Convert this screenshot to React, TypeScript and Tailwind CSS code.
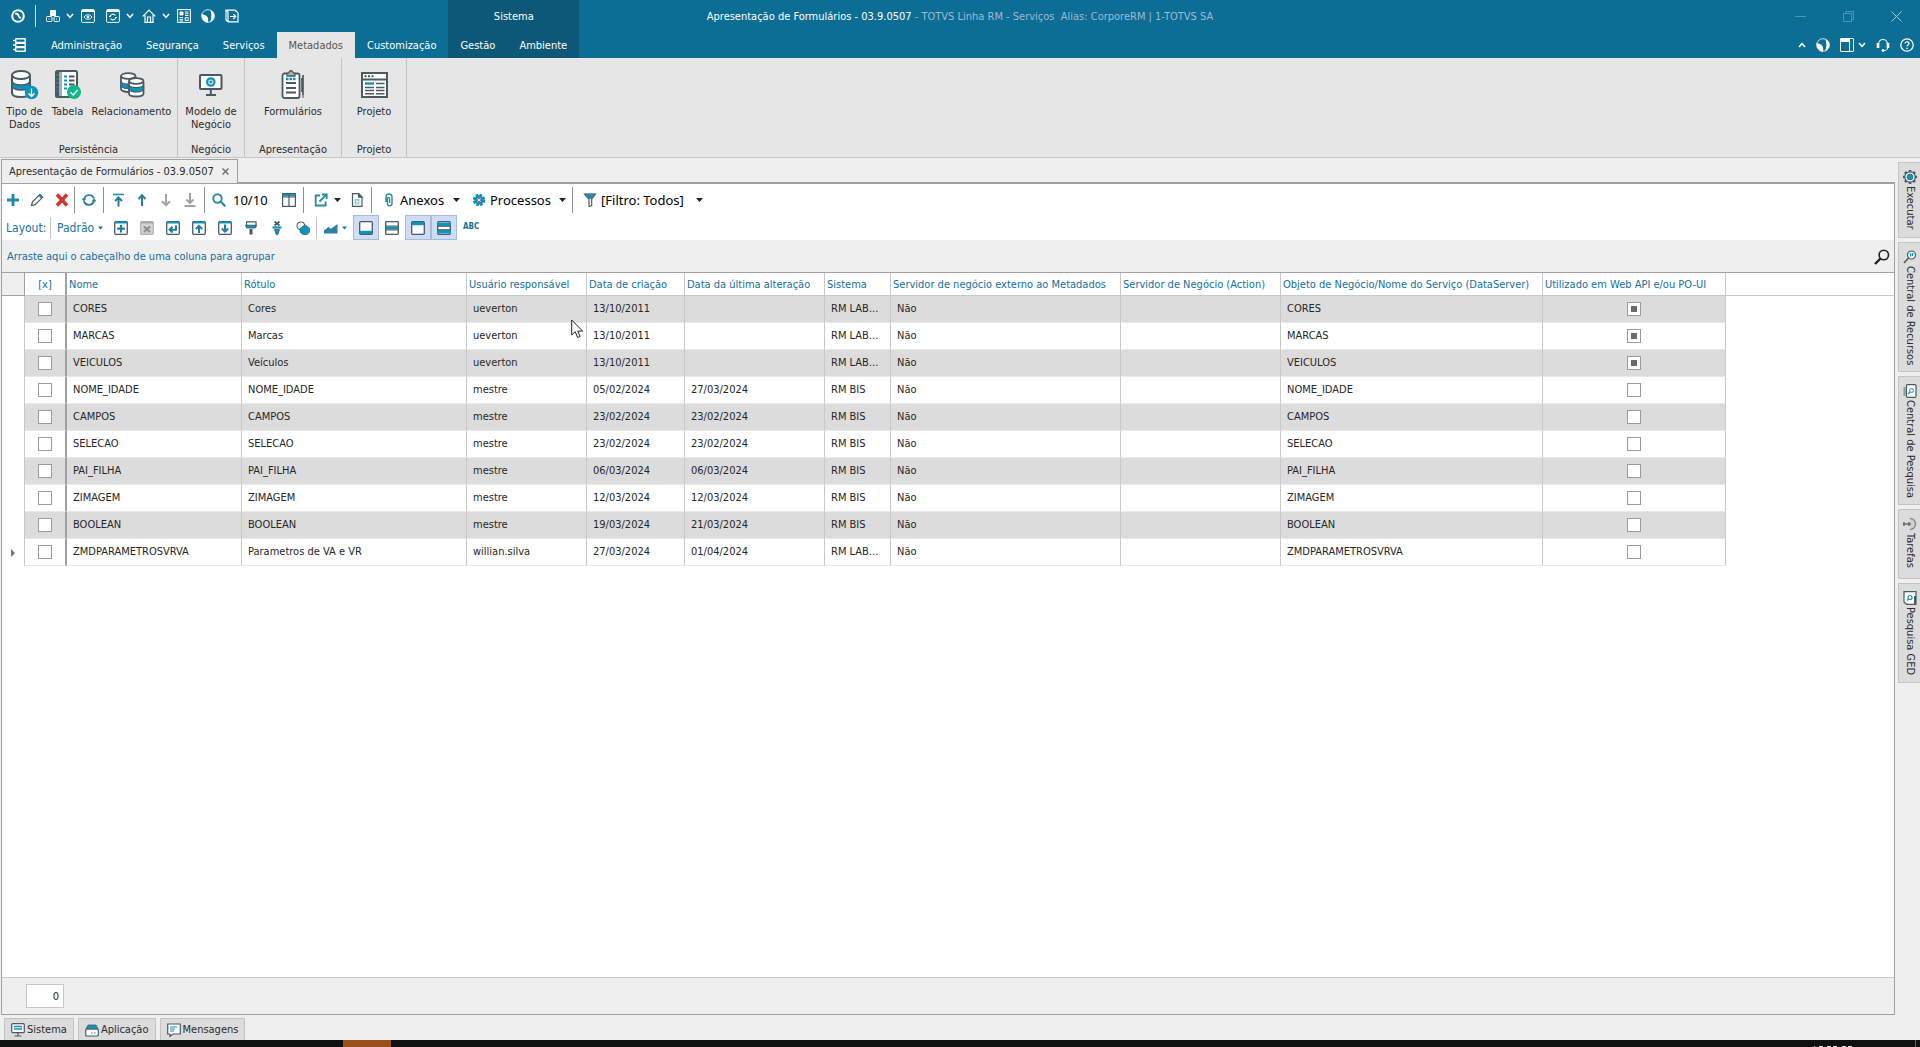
import type { ReactNode } from "react";

type IconProps = { className?: string };

const BLUE = "#0e93bd";
const SLATE = "#4a5a60";
const TEAL = "#2a8ba0";

/* ---------- title bar icons ---------- */

function Chevron({ up = false }: { up?: boolean }) {
  return (
    <svg width="8" height="6" viewBox="0 0 8 6" fill="none" stroke="#fff" strokeWidth="1.5">
      <path d={up ? "M1 5l3-3.3L7 5" : "M1 1l3 3.3L7 1"} />
    </svg>
  );
}

function Caret({ className = "text-[#222]" }: IconProps) {
  return (
    <svg className={className} width="7" height="4" viewBox="0 0 7 4" fill="currentColor">
      <path d="M0 0h7L3.5 4z" />
    </svg>
  );
}

function LogoIcon() {
  return (
    <svg width="14" height="14" viewBox="0 0 14 14" fill="none" stroke="#fff">
      <circle cx="7" cy="7" r="5.8" strokeWidth="2" />
      <path d="M4.200 5c1.600-.8 2.800.1 3.200 1.500.4 1.400 1.200 2.300 2.500 2.300" strokeWidth="1.900" />
    </svg>
  );
}

function CubesIcon() {
  return (
    <svg width="14" height="14" viewBox="0 0 14 14" fill="none" stroke="#fff">
      <path d="M4.500 1.500h5v5h-5z" fill="#fff" />
      <rect x=".5" y="7.500" width="5.500" height="5" rx="1" />
      <rect x="8" y="7.500" width="5.500" height="5" rx="1" />
      <path d="M3 9.500v1M10.500 9.500v1" />
    </svg>
  );
}

function PageFrame({ children }: { children: ReactNode }) {
  return (
    <svg width="14" height="14" viewBox="0 0 14 14" fill="none" stroke="#fff">
      <rect x=".6" y=".6" width="12.800" height="12.800" rx="1" />
      <path d="M1 2h12" strokeWidth="2" />
      {children}
    </svg>
  );
}

function HomeIcon() {
  return (
    <svg width="14" height="14" viewBox="0 0 14 14" fill="none" stroke="#fff" strokeWidth="1.200">
      <path d="M.8 7.300L7 1l6.200 6.300" />
      <path d="M3 6v7.300h8V6M5.500 13V8h3v5" />
    </svg>
  );
}

function BoardIcon() {
  return (
    <svg width="14" height="14" viewBox="0 0 14 14" fill="none" stroke="#fff">
      <rect x=".6" y=".6" width="12.800" height="12.800" />
      <path d="M3 3h3v3H3z" fill="#fff" />
      <path d="M8 3h3.500M8 4.800h3.500M8 6.500h3.500M2.500 8.500h3.500M2.500 10.300h3.500M2.500 12h3.500M8.200 8.700h3v2.800h-3z" />
    </svg>
  );
}

function TotvsIcon() {
  return (
    <svg width="14" height="14" viewBox="0 0 14 14">
      <circle cx="7" cy="7" r="6.300" fill="none" stroke="#fff" strokeWidth=".8" />
      <path d="M.7 5.200C2.500 5 5 6 6.300 7.800c.9 1.500 1 3.700.7 5.600C3.500 13.500.3 10.400.7 5.200z" fill="#fff" />
      <path d="M9.500 1.200c3 1 4.300 3.600 3.900 6.600-.4 2.700-2 4.700-4.400 5.300 1.300-2.600 2-6.300.5-11.900z" fill="#fff" />
    </svg>
  );
}

function ExitIcon() {
  return (
    <svg width="14" height="14" viewBox="0 0 14 14" fill="none" stroke="#fff" strokeWidth="1.200">
      <path d="M1 1.200h9l3 2.500v9.100H3L1 11z" />
      <path d="M1.500 1.500L3 3v10" />
      <path d="M5 7.500h5.500M8.200 5l2.500 2.500L8.200 10" />
    </svg>
  );
}

function MenuIcon() {
  return (
    <svg width="13" height="14" viewBox="0 0 13 14" fill="none" stroke="#fff" strokeWidth="1.400">
      <rect x="2.700" y=".8" width="9.500" height="3.600" rx=".5" />
      <rect x="2.700" y="5.200" width="9.500" height="3.600" rx=".5" />
      <rect x="2.700" y="9.600" width="9.500" height="3.600" rx=".5" />
      <path d="M0 2.500h3M0 7h3M0 11.500h3" />
    </svg>
  );
}

function PanelIcon() {
  return (
    <svg width="14" height="14" viewBox="0 0 14 14" fill="none" stroke="#fff">
      <rect x=".5" y=".5" width="13" height="13" rx=".5" />
      <path d="M9.500 1v12" />
      <path d="M1 2.500h8" strokeWidth="3" />
    </svg>
  );
}

function HeadsetIcon() {
  return (
    <svg width="14" height="14" viewBox="0 0 14 14" fill="none" stroke="#fff">
      <path d="M2.500 9V6a4.500 4.500 0 019 0v3" strokeWidth="1.200" />
      <path d="M2 5v5M12 5v5" strokeWidth="2.600" />
      <path d="M11.500 10c0 1.800-1.500 2.600-4 2.600" />
      <circle cx="7" cy="12.500" r="1" fill="#fff" />
    </svg>
  );
}

function HelpIcon() {
  return (
    <svg width="14" height="14" viewBox="0 0 14 14" fill="none" stroke="#fff">
      <circle cx="7" cy="7" r="6.200" strokeWidth="1.300" />
      <path d="M5 5.600C5 3.200 9 3.200 9 5.500 9 7 7 6.900 7 8.600M7 9.700v1.400" strokeWidth="1.300" />
    </svg>
  );
}

/* ---------- ribbon icons ---------- */

function DataTypeIcon() {
  return (
    <svg width="28" height="30" viewBox="0 0 28 30" fill="none" stroke={SLATE} strokeWidth="2">
      <path d="M1 5v18c0 2.500 4 4 9 4s9-1.500 9-4V5" fill="#fff" />
      <path d="M1 11c0 2.200 4 4 9 4s9-1.800 9-4v5c0 2.200-4 4-9 4s-9-1.800-9-4z" fill={BLUE} strokeWidth="1.500" />
      <ellipse cx="10" cy="5" rx="9" ry="4" fill="#fff" />
      <circle cx="20.500" cy="22.500" r="6.800" fill={BLUE} stroke="none" />
      <path d="M20.500 18.500v8M17.500 23.500l3 3 3-3" stroke="#fff" strokeWidth="1.300" />
    </svg>
  );
}

function TableIcon() {
  return (
    <svg width="28" height="30" viewBox="0 0 28 30" fill="none" stroke={SLATE} strokeWidth="2">
      <rect x="2" y="1" width="21" height="26" rx="1.500" fill="#fff" />
      <path d="M3.500 1v26" strokeWidth="4" />
      <path d="M7 2v24" strokeWidth="1" />
      <path d="M3.500 4v20" stroke={BLUE} strokeWidth="1.600" strokeDasharray="2 2" />
      <path d="M10 6.500h3M10 10.500h3M10 14.500h3M10 18.500h3" stroke={BLUE} />
      <path d="M15 6.500h5.500M15 10.500h5.500M15 14.500h5.500" />
      <circle cx="20" cy="22" r="7" fill="#10b58b" stroke="none" />
      <path d="M16.500 22.200l2.700 2.700 4.500-5" stroke="#fff" strokeWidth="1.400" />
    </svg>
  );
}

function RelationIcon() {
  return (
    <svg width="26" height="26" viewBox="0 0 26 26" fill="none" stroke={SLATE} strokeWidth="1.800">
      <path d="M2 4v13c0 1.800 3.500 3 7 3s7.500-1.200 7.500-3V4" fill="#fff" />
      <path d="M2 9.500c1 2 4 2.500 7 2.500v4.500c-3 0-6-.5-7-2.500z" fill={BLUE} strokeWidth="1" />
      <ellipse cx="9.200" cy="4" rx="7.200" ry="2.800" fill="#fff" />
      <path d="M10 9.500v12c0 1.800 3 3 7.200 3s7.300-1.200 7.300-3v-12" fill="#fff" />
      <path d="M10 13c1 2 4 2.500 7.200 2.500s6.300-.5 7.300-2.500v4.500c-1 2-4 2.500-7.300 2.500S11 19.500 10 17.500z" fill={BLUE} strokeWidth="1.200" />
      <ellipse cx="17.200" cy="9" rx="7.200" ry="2.800" fill="#fff" />
    </svg>
  );
}

function ModelIcon() {
  return (
    <svg width="26" height="24" viewBox="0 0 26 24" fill="none" stroke={SLATE} strokeWidth="2">
      <rect x="2" y="2" width="21.500" height="14" rx="1" fill="#fff" />
      <path d="M12.800 16v6M8 22h10" />
      <circle cx="12.800" cy="9" r="3.700" fill="#bfe4f0" stroke={BLUE} strokeWidth="2.200" />
      <circle cx="12.800" cy="9" r="1.300" fill={BLUE} stroke="none" />
    </svg>
  );
}

function FormIcon() {
  return (
    <svg width="24" height="30" viewBox="0 0 24 30" fill="none" stroke={SLATE} strokeWidth="1.800">
      <rect x="1.500" y="3.500" width="17" height="24.500" rx="2" fill="#fff" />
      <path d="M6 6V3.500c1.500 0 2.200-1 2.500-2 .8-1 2.300-1 3 0 .3 1 1 2 2.500 2V6z" fill="#aab4b8" strokeWidth="1.300" />
      <path d="M5 9h10" stroke={BLUE} strokeWidth="2.400" strokeDasharray="2.500 1" />
      <path d="M5 13h10M5 18h10M5 22.500h10" />
      <path d="M22 5v20M21 8v14" strokeWidth="1.700" />
      <path d="M22 25v3" strokeWidth="1" />
    </svg>
  );
}

function ProjectIcon() {
  return (
    <svg width="27" height="26" viewBox="0 0 27 26" fill="none" stroke={SLATE} strokeWidth="2">
      <rect x="1" y="1" width="25" height="24" fill="#fff" />
      <path d="M1 7.500h25" />
      <path d="M3.500 4.300h2M7 4.300h2M10.500 4.300h2" />
      <path d="M4 11.500h9" stroke={BLUE} strokeWidth="2.400" />
      <path d="M15 11.500h8.500M4 15.500h9M15 15.500h8.500M4 18.500h9M15 18.500h8.500M4 21.700h9M15 21.700h8.500" strokeWidth="1.600" />
    </svg>
  );
}

/* ---------- toolbar icons ---------- */

function T({ children }: { children: ReactNode }) {
  return (
    <svg className="shrink-0" width="14" height="14" viewBox="0 0 14 14" fill="none" stroke={SLATE} strokeWidth="1.200">
      {children}
    </svg>
  );
}

const plusIcon = <T><path d="M7 1v12M1 7h12" stroke="#1d8bad" strokeWidth="2.800" /></T>;
const pencilIcon = (
  <T>
    <path d="M1.500 12.500l1-3.700L9.700 1.600l2.800 2.700-7.300 7.300z" />
    <path d="M8.700 2.700l2.700 2.700 1.500-1.500L10.200 1z" fill={BLUE} strokeWidth=".6" />
  </T>
);
const removeIcon = <T><path d="M2 1.500l10 11M12 1.500l-10 11" stroke="#cf3830" strokeWidth="3.600" /></T>;
const syncIcon = (
  <T>
    <path d="M2 6.500a5.200 5.200 0 0110-1" stroke={TEAL} strokeWidth="1.800" />
    <path d="M12 7.500a5.200 5.200 0 01-10 1" stroke="#2b7490" strokeWidth="1.800" />
    <path d="M-.5 5.500h5L2 8.800zM9.500 8.500h5L12 5.200z" fill={TEAL} stroke="none" />
  </T>
);
const topIcon = <T><path d="M2 1.500h11" stroke={TEAL} strokeWidth="1.600" /><path d="M7.500 13.500V5M4 8l3.500-3.500L11 8" stroke="#27799c" strokeWidth="2" /></T>;
const upIcon = <T><path d="M7 13V2M3.500 6L7 2.200 10.500 6" stroke="#2280a0" strokeWidth="2" /></T>;
const downIcon = <T><path d="M7 1v11M3 8.200L7 12l4-3.800" stroke="#a3a3a3" strokeWidth="2" /></T>;
const bottomIcon = <T><path d="M7 0v9.500M3.500 6.500L7 10l3.500-3.500M1.500 13h11" stroke="#a3a3a3" strokeWidth="2" /></T>;
const searchIcon = <T><circle cx="5.500" cy="5.500" r="4.200" stroke={TEAL} strokeWidth="2" /><path d="M8.700 8.700l4.500 4.500" stroke={TEAL} strokeWidth="2.200" /></T>;
const columnsIcon = (
  <T>
    <rect x=".6" y=".6" width="12.800" height="12.800" strokeWidth="1.200" />
    <path d="M1 2.200h12" stroke={BLUE} strokeWidth="2.400" />
    <path d="M7 1v12.500M.5 4h13" />
  </T>
);
const exportIcon = (
  <T>
    <path d="M6 2.500H1.700v10h10V8.500" stroke={TEAL} strokeWidth="1.800" />
    <path d="M5.500 8.500L12 2M8 1.500h4.700V6" stroke={TEAL} strokeWidth="1.800" />
  </T>
);
const docIcon = (
  <T>
    <path d="M2.500.6h6l3.500 3.500v9.300H2.500z" fill="#fff" />
    <path d="M8.500.6v3.500H12z" fill={SLATE} />
    <path d="M4.500 6h5v5.500h-5z" fill="#8fcbd9" stroke="none" />
    <path d="M6 7.500L8.500 9 6 10.500" stroke="#fff" strokeWidth=".9" />
  </T>
);
const clipIcon = (
  <T>
    <path d="M4 9V4a3 3 0 016 0v6.500a2.300 2.300 0 01-4.600 0V5.500a1 1 0 012.200 0V10" stroke={TEAL} strokeWidth="1.400" />
  </T>
);
const gearIcon = (
  <T>
    <circle cx="7" cy="7" r="5" stroke={BLUE} strokeWidth="2.600" strokeDasharray="2.600 1.327" />
    <circle cx="7" cy="7" r="3.500" stroke="#1c86b3" strokeWidth="2.400" />
    <circle cx="7" cy="7" r="1.600" fill="#fff" stroke="#356" strokeWidth=".8" />
  </T>
);
const funnelIcon = (
  <T>
    <path d="M1.500 1h11L8.700 6v6.500l-2.700 1V6z" />
    <path d="M2 1.200h10L8.500 5.500h-3z" fill={BLUE} strokeWidth=".6" />
  </T>
);

function Sheet({ children }: { children: ReactNode }) {
  return (
    <T>
      <rect x=".7" y=".7" width="12.600" height="12.600" rx="1" fill="#fff" strokeWidth="1.300" />
      <path d="M1 1.500h12" stroke={BLUE} strokeWidth="2" />
      {children}
    </T>
  );
}
const addLayout = <Sheet><path d="M7 4v7.500M3.200 7.700h7.600" stroke="#1580a8" strokeWidth="2.200" /></Sheet>;
const delLayout = (
  <T>
    <rect x=".7" y=".7" width="12.600" height="12.600" rx="1" fill="#d2d2d2" stroke="#b0b0b0" />
    <path d="M1 1.500h12" stroke="#a8a8a8" strokeWidth="2" />
    <path d="M4 5.500l6 5.500M10 5.500L4 11" stroke="#8e8e8e" strokeWidth="2.200" />
  </T>
);
const returnLayout = <Sheet><path d="M10 4.500v4.200H4M6.500 5.800L3.600 8.700l2.900 2.800" stroke="#1580a8" strokeWidth="2" /></Sheet>;
const upLayout = <Sheet><path d="M7 12V5.500M3.800 8L7 4.800 10.200 8" stroke="#1580a8" strokeWidth="2" /></Sheet>;
const downLayout = <Sheet><path d="M7 3.500V10M3.800 7.500L7 10.700l3.200-3.200" stroke="#1580a8" strokeWidth="2" /></Sheet>;
const rollerIcon = (
  <T>
    <path d="M2.500.8h9.500v4H2.500z" fill="#fff" />
    <path d="M1.500 4.200h11L11.500 7H2.500z" fill={BLUE} strokeWidth=".8" />
    <path d="M5.500 8h3v5.500h-3z" fill={SLATE} stroke="none" />
  </T>
);
const sizeIcon = (
  <T>
    <path d="M4.500.5l5 4M9.500.5l-5 4" strokeWidth="1.800" />
    <path d="M2.500 6.500h9" stroke={BLUE} strokeWidth="2.200" />
    <path d="M4.500 8.500h5L7.800 13.700H6.200z" fill={BLUE} strokeWidth=".8" />
  </T>
);
const shapesIcon = (
  <T>
    <circle cx="4.800" cy="4.800" r="4" fill="#fff" strokeWidth="1" />
    <path d="M9 3.700l4.700 3.500v3.800l-2.500 2.500H6.700L4 11V7.500z" fill={BLUE} strokeWidth=".7" />
  </T>
);
const chartIcon = <T><path d="M0 12.500V9.500L4.500 6l2.500 1.700L13.500 3v9.500z" fill="#2a83a3" stroke="none" /></T>;

function Bands({ kind }: { kind: "bottom" | "middle" | "top" | "double" }) {
  return (
    <T>
      <rect x=".7" y=".7" width="12.600" height="12.600" rx="1" fill="#fff" strokeWidth="1.300" />
      {kind === "bottom" && <path d="M1 11.500h12" stroke={BLUE} strokeWidth="3.400" />}
      {kind === "middle" && <path d="M1 7h12" stroke={BLUE} strokeWidth="3" />}
      {kind === "middle" && <path d="M1 5h12M1 9h12" strokeWidth="1" />}
      {kind === "top" && <path d="M1 2.500h12" stroke={BLUE} strokeWidth="3.400" />}
      {kind === "double" && <path d="M0 3.200h14M0 10.800h14" stroke={BLUE} strokeWidth="3.400" />}
      {kind === "double" && <path d="M0 5.300h14M0 8.700h14" strokeWidth="1" />}
    </T>
  );
}

/* ---------- pieces ---------- */

function IconButton({ label, children, className = "w-6" }: { label: string; children: ReactNode; className?: string }) {
  return (
    <button type="button" aria-label={label} className={`flex h-6 shrink-0 items-center justify-center ${className}`}>
      {children}
    </button>
  );
}

function Sep({ className = "" }: IconProps) {
  return <span className={`h-[26px] w-px shrink-0 bg-[#909090] ${className}`} />;
}

function TitleBar() {
  return (
    <div className="flex h-8 items-center text-white">
      <div className="flex flex-1 items-center">
        <IconButton label="RM" className="w-[35px]"><LogoIcon /></IconButton>
        <span className="h-[22px] w-px bg-[#cfe0e8]" />
        <IconButton label="Módulos" className="ml-2 w-8 gap-1.5"><CubesIcon /><Chevron /></IconButton>
        <IconButton label="Visualizar"><PageFrame><path d="M3 8c2-3 6-3 8 0-2 3-6 3-8 0z" strokeWidth=".9" /><circle cx="7" cy="8" r="1" fill="#fff" /></PageFrame></IconButton>
        <IconButton label="Atualizar" className="ml-1 w-8 gap-1.5"><PageFrame><path d="M4 8a3 3 0 015.500-1.500M10 8a3 3 0 01-5.500 1.500M3 7.500h2M9 8.500h2" strokeWidth="1.200" /></PageFrame><Chevron /></IconButton>
        <IconButton label="Início" className="ml-1 w-8 gap-1.5"><HomeIcon /><Chevron /></IconButton>
        <IconButton label="Painel"><BoardIcon /></IconButton>
        <IconButton label="TOTVS"><TotvsIcon /></IconButton>
        <IconButton label="Sair"><ExitIcon /></IconButton>
      </div>
      <h1 className="whitespace-pre pt-px text-center">
        Apresentação de Formulários - 03.9.0507<span className="text-[#9fb9d6]"> - TOTVS Linha RM - Serviços  Alias: CorporeRM | 1-TOTVS SA</span>
      </h1>
      <div className="flex flex-1 justify-end text-[#5595b2]">
        <button type="button" aria-label="Minimizar" className="flex w-12 justify-center">
          <svg width="11" height="11" fill="none" stroke="currentColor"><path d="M0 5.500h11" /></svg>
        </button>
        <button type="button" aria-label="Restaurar" className="flex w-12 justify-center">
          <svg width="11" height="11" fill="none" stroke="currentColor"><path d="M.5 2.500h8v8h-8zM2.500 2.500v-2h8v8h-2" /></svg>
        </button>
        <button type="button" aria-label="Fechar" className="flex w-12 justify-center text-[#a5c8d8]">
          <svg width="11" height="11" fill="none" stroke="currentColor"><path d="M.5.500l10 10M10.500.500l-10 10" /></svg>
        </button>
      </div>
    </div>
  );
}

const tabCls = "flex h-[26px] items-center px-3 pt-px";

function TabRow() {
  return (
    <nav className="flex h-[26px] items-center text-white">
      <button type="button" aria-label="Menu" className="flex w-[39px] justify-center"><MenuIcon /></button>
      {["Administração", "Segurança", "Serviços"].map((t) => (
        <button type="button" key={t} className={tabCls}>{t}</button>
      ))}
      <button type="button" className={`${tabCls} bg-[#e6e6e6] text-[#5a5448]`}>Metadados</button>
      <button type="button" className={tabCls}>Customização</button>
      <div className="relative flex bg-[#0e5877]">
        <div className="absolute inset-x-0 bottom-full flex h-8 items-center justify-center bg-[#0e5877] pt-px">Sistema</div>
        <button type="button" className={tabCls}>Gestão</button>
        <button type="button" className={tabCls}>Ambiente</button>
      </div>
      <div className="ml-auto flex items-center pr-1.5">
        <button type="button" aria-label="Recolher" className="mr-2.5"><Chevron up /></button>
        <button type="button" aria-label="TOTVS" className="mr-2.5"><TotvsIcon /></button>
        <button type="button" aria-label="Janelas" className="mr-2.5 flex items-center gap-1"><PanelIcon /><Chevron /></button>
        <button type="button" aria-label="Suporte" className="mr-2.5"><HeadsetIcon /></button>
        <button type="button" aria-label="Ajuda"><HelpIcon /></button>
      </div>
    </nav>
  );
}

const ribbon: { name: string; cls: string; items: { label: string; cls: string; icon: ReactNode }[] }[] = [
  {
    name: "Persistência",
    cls: "w-[178px]",
    items: [
      { label: "Tipo de Dados", cls: "w-[42px]", icon: <DataTypeIcon /> },
      { label: "Tabela", cls: "w-[44px]", icon: <TableIcon /> },
      { label: "Relacionamento", cls: "w-[84px]", icon: <RelationIcon /> },
    ],
  },
  { name: "Negócio", cls: "w-[67px]", items: [{ label: "Modelo de Negócio", cls: "w-[56px]", icon: <ModelIcon /> }] },
  { name: "Apresentação", cls: "w-[97px]", items: [{ label: "Formulários", cls: "w-[80px]", icon: <FormIcon /> }] },
  { name: "Projeto", cls: "w-[65px]", items: [{ label: "Projeto", cls: "w-[56px]", icon: <ProjectIcon /> }] },
];

function Ribbon() {
  return (
    <section className="flex h-[100px] border-b border-[#c6c6c6] bg-[#e6e6e6] text-[#2b2b2b]">
      {ribbon.map((g) => (
        <div key={g.name} className={`flex flex-col items-center border-r border-[#c4c4c4] ${g.cls}`}>
          <div className="flex flex-1 justify-center pt-[11px]">
            {g.items.map((i) => (
              <button type="button" key={i.label} className={`flex flex-col items-center ${i.cls}`}>
                <span className="flex h-8 items-center justify-center">{i.icon}</span>
                <span className="mt-1 text-center leading-[13px]">{i.label}</span>
              </button>
            ))}
          </div>
          <div className="pb-px leading-[13px]">{g.name}</div>
        </div>
      ))}
    </section>
  );
}

function MainToolbar() {
  return (
    <div className="flex h-[31px] shrink-0 items-center font-['Noto_Sans','DejaVu_Sans',sans-serif] text-[13px] text-black">
      <IconButton label="Incluir" className="w-[22px]">{plusIcon}</IconButton>
      <IconButton label="Editar" className="w-[26px]">{pencilIcon}</IconButton>
      <IconButton label="Excluir">{removeIcon}</IconButton>
      <Sep />
      <IconButton label="Atualizar" className="mx-0.5 w-6">{syncIcon}</IconButton>
      <Sep className="mr-0.5" />
      <IconButton label="Primeiro">{topIcon}</IconButton>
      <IconButton label="Anterior">{upIcon}</IconButton>
      <IconButton label="Próximo">{downIcon}</IconButton>
      <IconButton label="Último">{bottomIcon}</IconButton>
      <Sep className="ml-0.5" />
      <IconButton label="Pesquisar" className="ml-0.5 w-6">{searchIcon}</IconButton>
      <span className="ml-0.5 w-10">10/10</span>
      <IconButton label="Colunas" className="ml-1 w-6">{columnsIcon}</IconButton>
      <Sep className="ml-0.5" />
      <IconButton label="Exportar" className="ml-2.5 w-[27px] gap-1.5">{exportIcon}<Caret /></IconButton>
      <IconButton label="Relatório" className="ml-1 w-6">{docIcon}</IconButton>
      <Sep className="ml-0.5" />
      <button type="button" className="ml-2.5 flex w-[78px] items-center gap-1">{clipIcon}Anexos<span className="ml-auto"><Caret /></span></button>
      <button type="button" className="ml-3 flex w-[94px] items-center gap-1">{gearIcon}Processos<span className="ml-auto"><Caret /></span></button>
      <Sep className="ml-1.5" />
      <button type="button" className="ml-2.5 flex w-[120px] items-center gap-1">{funnelIcon}[Filtro: Todos]<span className="ml-auto"><Caret /></span></button>
    </div>
  );
}

const toggle = "flex h-[25px] w-[26px] shrink-0 items-center justify-center";
const pressed = `${toggle} border border-[#a9b9d8] bg-[#cfdcf5]`;

function LayoutToolbar() {
  return (
    <div className="flex h-[25px] shrink-0 items-center text-[12px] text-[#1873a0]">
      <span className="w-[48px] pl-1">Layout:</span>
      <span className="h-[22px] w-px bg-[#c4c4c4]" />
      <button type="button" className="ml-1.5 flex w-[51px] items-center gap-1">Padrão<Caret className="w-[5px] text-[#1873a0]" /></button>
      {[
        ["Novo layout", addLayout],
        ["Excluir layout", delLayout],
        ["Restaurar layout", returnLayout],
        ["Exportar layout", upLayout],
        ["Importar layout", downLayout],
        ["Formatar", rollerIcon],
        ["Ajustar colunas", sizeIcon],
        ["Formas", shapesIcon],
      ].map(([l, i]) => (
        <IconButton key={l as string} label={l as string} className="w-[26px]">{i}</IconButton>
      ))}
      <span className="h-[22px] w-px bg-[#c4c4c4]" />
      <button type="button" aria-label="Gráfico" className="flex w-[36px] items-center justify-center gap-1">{chartIcon}<Caret className="w-[5px] text-[#1873a0]" /></button>
      <button type="button" aria-label="Rodapé" className={pressed}><Bands kind="bottom" /></button>
      <button type="button" aria-label="Faixa central" className={toggle}><Bands kind="middle" /></button>
      <button type="button" aria-label="Cabeçalho" className={pressed}><Bands kind="top" /></button>
      <button type="button" aria-label="Faixas alternadas" className={pressed}><Bands kind="double" /></button>
      <button type="button" className="ml-1.5 pb-0.5 font-['DejaVu_Sans_Condensed','DejaVu_Sans',sans-serif] text-[8px] font-bold leading-none text-[#1d6f8d]">ABC</button>
    </div>
  );
}

function Box({ label, mixed = false }: { label: string; mixed?: boolean }) {
  return (
    <input
      type="checkbox"
      aria-label={label}
      ref={(el) => {
        if (el) el.indeterminate = mixed;
      }}
      className="mx-auto block size-3.5 appearance-none border border-[#9b9b9b] bg-white indeterminate:bg-[#6b6b6b] indeterminate:shadow-[inset_0_0_0_3px_white]"
    />
  );
}

const columns: [string, string][] = [
  ["Nome", "w-[175px]"],
  ["Rótulo", "w-[225px]"],
  ["Usuário responsável", "w-[120px]"],
  ["Data de criação", "w-[98px]"],
  ["Data da última alteração", "w-[140px]"],
  ["Sistema", "w-[66px]"],
  ["Servidor de negócio externo ao Metadados", "w-[230px]"],
  ["Servidor de Negócio (Action)", "w-[160px]"],
  ["Objeto de Negócio/Nome do Serviço (DataServer)", "w-[262px]"],
  ["Utilizado em Web API e/ou PO-UI", "w-[183px]"],
];

const rows = [
  ["CORES", "Cores", "ueverton", "13/10/2011", "", "RM LAB..."],
  ["MARCAS", "Marcas", "ueverton", "13/10/2011", "", "RM LAB..."],
  ["VEICULOS", "Veículos", "ueverton", "13/10/2011", "", "RM LAB..."],
  ["NOME_IDADE", "NOME_IDADE", "mestre", "05/02/2024", "27/03/2024", "RM BIS"],
  ["CAMPOS", "CAMPOS", "mestre", "23/02/2024", "23/02/2024", "RM BIS"],
  ["SELECAO", "SELECAO", "mestre", "23/02/2024", "23/02/2024", "RM BIS"],
  ["PAI_FILHA", "PAI_FILHA", "mestre", "06/03/2024", "06/03/2024", "RM BIS"],
  ["ZIMAGEM", "ZIMAGEM", "mestre", "12/03/2024", "12/03/2024", "RM BIS"],
  ["BOOLEAN", "BOOLEAN", "mestre", "19/03/2024", "21/03/2024", "RM BIS"],
  ["ZMDPARAMETROSVRVA", "Parametros de VA e VR", "willian.silva", "27/03/2024", "01/04/2024", "RM LAB..."],
];

function Grid() {
  return (
    <table className="w-full table-fixed border-separate border-spacing-0 text-[#262626]">
      <thead>
        <tr className="h-[23px] text-left text-[#146f9d]">
          <th className="w-[23px] border-b border-r border-[#a0a0a0] bg-[#efefef]" />
          <th className="w-[42px] border-b border-r-2 border-b-[#c9c9c9] border-r-[#a0a0a0] pt-0.5 text-center font-normal">[x]</th>
          {columns.map(([c, w]) => (
            <th key={c} className={`${w} whitespace-nowrap border-b border-r border-[#c9c9c9] pl-0.5 pt-0.5 font-normal`}>{c}</th>
          ))}
          <th className="border-b border-[#c9c9c9]" />
        </tr>
      </thead>
      <tbody>
        {rows.map((r, n) => {
          const last = n === rows.length - 1;
          const bg = n % 2 === 0 ? "bg-[#dcdcdc]" : "bg-white";
          const cell = `${bg} border-b border-r border-b-[#e9e9e9] border-r-[#c9c9c9]`;
          const cells = [...r, "Não", "", r[0]];
          return (
            <tr key={r[0]} className="h-[27px]">
              <td className="border-r border-[#c9c9c9]">
                {last && (
                  <svg className="mx-auto" width="4" height="8" viewBox="0 0 4 8" fill="#777"><path d="M0 0l4 4-4 4z" /></svg>
                )}
              </td>
              <td className={`${bg} border-b border-r-2 border-b-[#e9e9e9] border-r-[#a0a0a0]`}>
                <Box label={`Selecionar ${r[0]}`} />
              </td>
              {cells.map((c, i) => (
                <td key={i} className={`${cell} whitespace-nowrap pl-1.5`}>{c}</td>
              ))}
              <td className={cell}><Box label={`Web API ${r[0]}`} mixed={n < 3} /></td>
              <td />
            </tr>
          );
        })}
      </tbody>
    </table>
  );
}

const sideTabs: { label: string; cls: string; icon: ReactNode }[] = [
  {
    label: "Executar",
    cls: "h-[76px]",
    icon: <T><path d="M7 0v14M0 7h14M2 2l10 10M12 2L2 12" strokeWidth="2.600" /><circle cx="7" cy="7" r="5.200" fill="#fff" strokeWidth="1.200" /><circle cx="7" cy="7" r="3" fill={BLUE} stroke="#2d6c80" strokeWidth=".8" /></T>,
  },
  {
    label: "Central de Recursos",
    cls: "h-[130px]",
    icon: <T><circle cx="8.500" cy="5" r="4" fill="#eef8fb" /><path d="M5.500 8L1 13" strokeWidth="1.600" /><path d="M7.500 3.500v3M9.500 3v3" stroke={BLUE} strokeWidth="1.400" /></T>,
  },
  {
    label: "Central de Pesquisa",
    cls: "h-[129px]",
    icon: <T><path d="M1.500 3v9" stroke="#8b979b" strokeWidth="2" /><rect x="3.500" y=".7" width="9.500" height="12.600" rx="1" fill="#fff" /><circle cx="8.500" cy="6.500" r="2" stroke={BLUE} strokeWidth="1" /><path d="M7 8l-2 2" stroke={BLUE} /></T>,
  },
  {
    label: "Tarefas",
    cls: "h-[70px]",
    icon: <T><path d="M7 1.500a5.500 5.500 0 010 11" fill="#d0d0d0" stroke="#8a8a8a" strokeWidth="1.400" /><path d="M0 7h8" stroke="#666" strokeWidth="1.400" /><path d="M1 5v4M6 5v4" stroke="#666" strokeWidth="1.400" /></T>,
  },
  {
    label: "Pesquisa GED",
    cls: "h-[100px]",
    icon: <T><path d="M1 .7h12v12.600H3.500L1 11z" fill="#fff" /><path d="M12 5v8" strokeWidth="2" /><circle cx="7" cy="6.500" r="2" stroke={BLUE} /><path d="M5.500 8L4 9.500" stroke={BLUE} /></T>,
  },
];

function SideTabs() {
  return (
    <aside className="ml-[3px] flex w-[22px] shrink-0 flex-col gap-1 pt-1">
      {sideTabs.map((t) => (
        <button
          type="button"
          key={t.label}
          className={`flex flex-col items-center gap-0.5 border border-r-0 border-[#c3c3c3] bg-[#dcdcdc] pt-[7px] text-[#2b2b2b] ${t.cls}`}
        >
          {t.icon}
          <span className="whitespace-nowrap leading-[14px] [writing-mode:vertical-rl]">{t.label}</span>
        </button>
      ))}
    </aside>
  );
}

const statusTabs: [string, ReactNode][] = [
  ["Sistema", <T key="s"><rect x=".7" y=".7" width="12.600" height="9" rx="1" fill="#fff" /><path d="M3 3.500h8M3 6h8" stroke={BLUE} strokeWidth="1.500" /><path d="M7 10v3M3.500 13h7" /></T>],
  ["Aplicação", <T key="a"><rect x=".7" y="6" width="12.600" height="7" rx="1" fill="#fff" /><path d="M3 2h8l2 4H1z" fill={BLUE} stroke={SLATE} strokeWidth=".8" /><path d="M6 10h1.500M9 10h1.500" /></T>],
  ["Mensagens", <T key="m"><path d="M.7 1h12.600v10H6l-3 2.500V11H.7z" fill="#fff" /><path d="M3 4h7M3 6h5M3 8h4" stroke="#6bb7d2" strokeWidth="1.400" /></T>],
];

export default function App() {
  return (
    <div className="flex h-screen flex-col overflow-hidden bg-[#efefef] font-['DejaVu_Sans_Condensed','DejaVu_Sans',sans-serif] text-[11px] leading-4">
      <header className="bg-[#0c6d95]">
        <TitleBar />
        <TabRow />
      </header>
      <Ribbon />

      <div className="flex min-h-0 flex-1">
        <main className="flex min-w-0 flex-1 flex-col pt-px">
          <div className="flex h-6 items-stretch pl-px">
            <div className="flex items-center gap-2 border border-b-0 border-[#a0a0a0] bg-[#efefef] pl-[7px] pr-2 text-[#2b2b2b]">
              Apresentação de Formulários - 03.9.0507
              <button type="button" aria-label="Fechar aba">
                <svg width="7" height="7" viewBox="0 0 7 7" stroke="#666" strokeWidth="1.300"><path d="M.5.500l6 6M6.500.500l-6 6" /></svg>
              </button>
            </div>
            <div className="flex-1 border-b border-[#a0a0a0]" />
          </div>

          <div className="ml-px flex min-h-0 flex-1 flex-col border border-[#a0a0a0] bg-white">
            <MainToolbar />
            <LayoutToolbar />
            <div className="flex h-[33px] shrink-0 items-center justify-between border-b border-[#a0a0a0] bg-[#efefef] pl-[5px] pr-1 pt-0.5 text-[#146f9d]">
              Arraste aqui o cabeçalho de uma coluna para agrupar
              <button type="button" aria-label="Localizar">
                <svg width="16" height="16" viewBox="0 0 16 16" fill="none" stroke="#222"><circle cx="9.800" cy="6" r="4.700" strokeWidth="1.600" /><path d="M6.500 9.500L1 15" strokeWidth="2.400" /></svg>
              </button>
            </div>
            <div className="min-h-0 flex-1 overflow-hidden"><Grid /></div>
            <div className="flex h-[37px] shrink-0 items-center border-t border-[#c6c6c6] bg-[#efefef] pl-6">
              <input aria-label="Total" defaultValue="0" className="h-6 w-[38px] border border-[#c6c6c6] bg-white pr-1 text-right text-[#262626]" />
            </div>
          </div>
        </main>
        <SideTabs />
      </div>

      <footer className="flex h-[25px] shrink-0 items-end gap-1 pl-1 text-[#2b2b2b]">
        {statusTabs.map(([label, icon]) => (
          <button type="button" key={label} className="flex h-[22px] items-center gap-0.5 border border-b-0 border-[#c3c3c3] bg-[#dcdcdc] px-1.5 pt-px">
            {icon}{label}
          </button>
        ))}
      </footer>
      <div className="flex h-[7px] shrink-0 bg-[#101010] pl-[343px]">
        <span className="w-12 bg-[#9a501a]" />
        <svg className="ml-auto mr-[62px] self-end" width="40" height="1" fill="#ddd">
          <path d="M1 0h1v1h-1zM6 0h4v1h-4zM14 0h4v1h-4zM20 0h4v1h-4zM29 0h4v1h-4zM35 0h4v1h-4z" />
        </svg>
        <span className="mr-1 w-px bg-[#666]" />
      </div>

      <svg className="pointer-events-none absolute left-[571px] top-[319px]" width="13" height="20" viewBox="0 0 13 20" fill="#fff" stroke="#222">
        <path d="M.7 1v15l3.500-3.300L6.700 18.500l2.500-1.100-2.500-5.300h5z" />
      </svg>
    </div>
  );
}
